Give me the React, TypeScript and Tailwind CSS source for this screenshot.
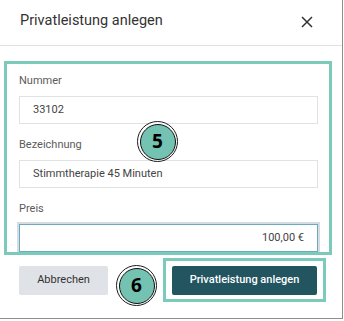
import React from "react";

function Badge({ n, className }: { n: string; className: string }) {
  return (
    <div
      className={`absolute w-[41px] h-[41px] rounded-full bg-white border-[1.5px] border-[#1a1a1a] p-[1.5px] ${className}`}
    >
      <div className="w-full h-full rounded-full border border-[#111] bg-[#74c2b2] flex items-center justify-center">
        <span
          className="text-[19px] font-bold text-black leading-none"
          style={{ fontFamily: '"Open Sans", "Liberation Sans", sans-serif' }}
        >
          {n}
        </span>
      </div>
    </div>
  );
}

function Field({
  label,
  value,
  focused,
  right,
  first,
}: {
  label: string;
  value: string;
  focused?: boolean;
  right?: boolean;
  first?: boolean;
}) {
  return (
    <div className={`flex flex-col ${first ? "" : "mt-[13px]"}`}>
      <div className="text-[11px] leading-[16px] text-[#5b5b5b]">{label}</div>
      <div
        className={`mt-[7px] h-[28px] flex items-center px-[13px] text-[11px] text-[#444] bg-white border ${
          focused
            ? "border-[#6aaac2] shadow-[0_0_0_2px_#d6dde1]"
            : "border-[#e0e3e6]"
        } ${right ? "justify-end" : ""}`}
      >
        {value}
      </div>
    </div>
  );
}

export default function App() {
  return (
    <div
      className="relative w-[344px] h-[321px] bg-white"
      style={{ fontFamily: 'Roboto, "Liberation Sans", sans-serif' }}
    >
      <div className="w-[343px] h-[319px] border-r border-b border-[#8e8e8e] flex flex-col">
        <div className="h-[46px] border-b border-[#e2e2e2] flex items-start justify-between pl-5 pr-[29px] pt-[10px]">
          <div className="text-[14.5px] text-[#333] leading-normal">Privatleistung anlegen</div>
          <svg width="12" height="12" viewBox="0 0 12 12" className="mt-[6px]">
            <path d="M1 1 L11 11 M11 1 L1 11" stroke="#333" strokeWidth="1.5" fill="none" />
          </svg>
        </div>

        <div className="relative mt-[15px] ml-[4px] w-[328px] pt-[12px] pl-[15px] pr-[14px] pb-[3px]">
          <Field label="Nummer" value="33102" first />
          <Field label="Bezeichnung" value="Stimmtherapie 45 Minuten" />
          <Field label="Preis" value="100,00 €" focused right />
          <div className="absolute inset-0 border-[3px] border-[#7ccaba] pointer-events-none" />
        </div>

        <div className="mt-[11px] flex items-start justify-between pl-[19px] pr-[25px]">
          <button className="w-[89px] h-[29px] bg-[#dfe2e6] text-[11px] text-[#333] rounded-[2px]">
            Abbrechen
          </button>
          <div className="relative">
            <button className="w-[145px] h-[29px] bg-[#235560] text-white text-[11px] font-medium rounded-[2px]">
              Privatleistung anlegen
            </button>
            <div className="absolute left-[-9px] right-[-9px] top-[-8px] bottom-[-7px] border-[3px] border-[#7ccaba] pointer-events-none" />
          </div>
        </div>
      </div>

      <Badge n="5" className="left-[137px] top-[121px]" />
      <Badge n="6" className="left-[116px] top-[265px]" />
    </div>
  );
}
